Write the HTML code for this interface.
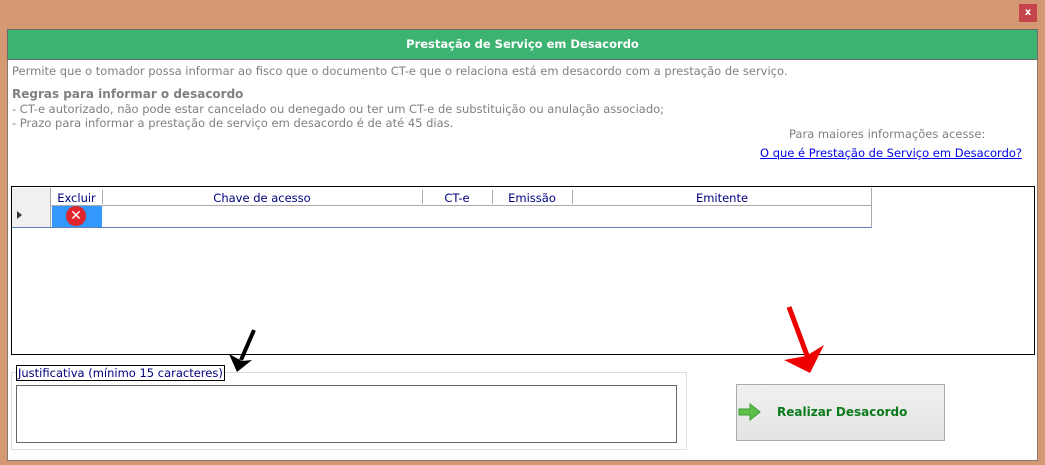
<!DOCTYPE html>
<html><head><meta charset="utf-8"><style>
*{margin:0;padding:0;box-sizing:border-box}
body{width:1045px;height:465px;background:#d49872;position:relative;overflow:hidden;font-family:"DejaVu Sans","Liberation Sans",sans-serif;font-size:11.5px}
.a{position:absolute}
.t{white-space:nowrap}
</style></head><body>
<div class="a" style="left:1019px;top:4px;width:18px;height:18px;background:#c5444c;color:#fff;font-size:10px;font-weight:bold;text-align:center;line-height:17px">x</div>
<div class="a" style="left:7px;top:29px;width:1031px;height:432px;background:#fff;border:1px solid #8a7a70"></div>
<div class="a" style="left:7px;top:29px;width:1031px;height:31px;background:#3cb371;border:1px solid #6b6b6b;color:#fff;font-weight:bold;text-align:center;line-height:29px">Prestação de Serviço em Desacordo</div>
<div class="a t" style="left:12px;top:64px;color:#808080">Permite que o tomador possa informar ao fisco que o documento CT-e que o relaciona está em desacordo com a prestação de serviço.</div>
<div class="a t" style="left:12px;top:87px;color:#808080;font-weight:bold;font-size:12px">Regras para informar o desacordo</div>
<div class="a t" style="left:12px;top:102px;color:#808080">- CT-e autorizado, não pode estar cancelado ou denegado ou ter um CT-e de substituição ou anulação associado;</div>
<div class="a t" style="left:12px;top:116px;color:#808080">- Prazo para informar a prestação de serviço em desacordo é de até 45 dias.</div>
<div class="a t" style="left:789px;top:127px;color:#808080">Para maiores informações acesse:</div>
<div class="a t" style="left:760px;top:146px;color:#0000ee;text-decoration:underline">O que é Prestação de Serviço em Desacordo?</div>
<div class="a" style="left:11px;top:186px;width:1024px;height:169px;border:1px solid #000"></div>
<div class="a" style="left:12px;top:188px;width:860px;height:40px;border-bottom:1px solid #5a80c0;border-right:1px solid #aaa"></div>
<div class="a" style="left:12px;top:205px;width:860px;height:1px;background:#aaa"></div>
<div class="a" style="left:12px;top:188px;width:39px;height:39px;background:#f0f0f0;border-right:1px solid #aaa"></div>
<div class="a" style="left:17px;top:211px;width:0;height:0;border-left:5px solid #333;border-top:4px solid transparent;border-bottom:4px solid transparent"></div>
<div class="a" style="left:52px;top:206px;width:50px;height:21px;background:#3399ff"></div>
<div class="a" style="left:66px;top:206px;width:20px;height:20px;border-radius:50%;background:#e0242b;color:#fff;text-align:center;line-height:20px;font-size:14px">✕</div>
<div class="a t" style="left:51px;top:191px;width:51px;text-align:center;color:#000080">Excluir</div>
<div class="a t" style="left:102px;top:191px;width:320px;text-align:center;color:#000080">Chave de acesso</div>
<div class="a t" style="left:422px;top:191px;width:70px;text-align:center;color:#000080">CT-e</div>
<div class="a t" style="left:492px;top:191px;width:80px;text-align:center;color:#000080">Emissão</div>
<div class="a t" style="left:572px;top:191px;width:300px;text-align:center;color:#000080">Emitente</div>
<div class="a" style="left:102px;top:190px;width:1px;height:14px;background:#aaa"></div>
<div class="a" style="left:422px;top:190px;width:1px;height:14px;background:#aaa"></div>
<div class="a" style="left:492px;top:190px;width:1px;height:14px;background:#aaa"></div>
<div class="a" style="left:572px;top:190px;width:1px;height:14px;background:#aaa"></div>
<div class="a" style="left:11px;top:372px;width:676px;height:78px;border:1px solid #ddd"></div>
<div class="a t" style="left:16px;top:365px;height:16px;padding:0 1px;border:1px solid #000;background:#fff;color:#000080;line-height:14px">Justificativa (mínimo 15 caracteres)</div>
<div class="a" style="left:16px;top:385px;width:661px;height:58px;border:1px solid #666"></div>
<div class="a" style="left:736px;top:384px;width:209px;height:57px;border:1px solid #aaa;background:linear-gradient(#f0f0f0,#e4e4e4)"></div>
<svg class="a" style="left:738px;top:403px" width="24" height="18"><path d="M1 6h11V1l10 8-10 8v-5H1z" fill="#5cc04a" stroke="#3a9a30"/></svg>
<div class="a t" style="left:777px;top:405px;color:#0a7a1a;font-weight:bold;font-size:12px">Realizar Desacordo</div>
<svg class="a" style="left:0;top:0" width="1045" height="465">
<path d="M254 330L241 360" stroke="#000" stroke-width="4"/>
<path d="M237 372L229 354L242 361L252 360Z" fill="#000"/>
<path d="M789 307L808 358" stroke="#e00" stroke-width="5"/>
<path d="M810 373L784 360L806 356L824 345Z" fill="#e00"/>
</svg>
</body></html>
